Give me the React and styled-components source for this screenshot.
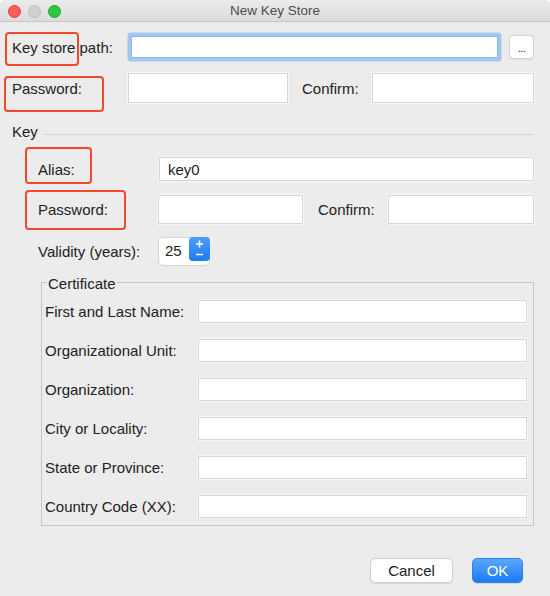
import { Fragment } from "react";
import styled, { createGlobalStyle } from "styled-components";

const GlobalStyle = createGlobalStyle`
  html, body {
    margin: 0;
    padding: 0;
    background: #ffffff;
  }
  body {
    font-family: "Liberation Sans", Arial, sans-serif;
    color: #222;
  }
`;

const Window = styled.div`
  width: 550px;
  height: 596px;
  background: #ececec;
  border-radius: 5px 5px 0 0;
  overflow: hidden;
  display: flex;
  flex-direction: column;
`;

const TitleBar = styled.div`
  position: relative;
  height: 21px;
  flex-shrink: 0;
  background: linear-gradient(#ebebeb, #dcdcdc);
  border-bottom: 1px solid #c6c6c6;
  display: flex;
  align-items: center;
  justify-content: center;
  font-size: 13.5px;
  color: #4d4d4d;
`;

const Lights = styled.div`
  position: absolute;
  left: 8px;
  top: 5px;
  display: flex;
  gap: 7px;
`;

const Light = styled.span`
  width: 13px;
  height: 13px;
  border-radius: 50%;
  box-sizing: border-box;
  background: ${(p) => p.$bg};
  border: 0.5px solid ${(p) => p.$edge};
`;

const Body = styled.div`
  padding: 10px 16px 0 12px;
  display: flex;
  flex-direction: column;
`;

const PathRow = styled.div`
  display: flex;
  align-items: center;
  height: 30px;
`;

const FieldGrid = styled.div`
  display: grid;
  grid-template-columns: ${(p) => p.$cols};
  align-items: center;
  height: ${(p) => p.$h}px;
  margin-top: ${(p) => p.$mt || 0}px;
`;

const Label = styled.div`
  position: relative;
  display: flex;
  align-items: center;
  align-self: stretch;
  font-size: 15px;
  white-space: nowrap;
  width: ${(p) => (p.$w ? `${p.$w}px` : "auto")};
  padding-left: ${(p) => p.$pl || 0}px;
  flex-shrink: 0;

  ${(p) =>
    p.$mark &&
    `
    &::after {
      content: "";
      position: absolute;
      left: ${p.$mark.l}px;
      top: ${p.$mark.t}px;
      width: ${p.$mark.w}px;
      height: ${p.$mark.h}px;
      box-sizing: border-box;
      border: 2px solid #f2482b;
      border-radius: 4px;
    }
  `}
`;

const Input = styled.div`
  box-sizing: border-box;
  height: ${(p) => p.$h}px;
  background: #fff;
  border: 1px solid #d6d6d6;
  box-shadow: 0 0 0 1px #f6f6f6;
  display: flex;
  align-items: center;
  padding-left: 8px;
  font-size: 15px;
  color: #1d1d1d;
`;

const FocusInput = styled.div`
  flex: 1;
  box-sizing: border-box;
  height: 22px;
  margin: 0 4px;
  background: #fff;
  border: 1px solid #8db6ea;
  box-shadow: 0 0 0 3.5px #a3c7f3;
  border-radius: 1px;
`;

const BrowseButton = styled.div`
  box-sizing: border-box;
  width: 25px;
  height: 24px;
  margin-left: 7px;
  background: #fff;
  border: 1px solid #d3d3d3;
  border-radius: 4px;
  box-shadow: 0 0.5px 1px rgba(0, 0, 0, 0.08);
  display: flex;
  justify-content: center;
  align-items: flex-end;
  padding-bottom: 4px;
  font-size: 11px;
  letter-spacing: -0.5px;
  line-height: 1;
`;

const SectionHeader = styled.div`
  display: flex;
  align-items: center;
  height: 16px;
  margin-top: 20px;
  font-size: 15px;
`;

const Rule = styled.div`
  flex: 1;
  height: 1px;
  background: #d2d2d2;
  margin: 6px 0 0 5px;
`;

const KeySection = styled.div`
  padding-left: 26px;
  display: flex;
  flex-direction: column;
`;

const Spinner = styled.div`
  box-sizing: border-box;
  width: 52px;
  height: 29px;
  background: #fff;
  border: 1px solid #d4d4d4;
  border-radius: 5px;
  display: flex;
  align-items: flex-start;
  font-size: 15px;
`;

const SpinValue = styled.span`
  flex: 1;
  align-self: center;
  padding-left: 6px;
  margin-top: -2px;
`;

const SpinArrows = styled.div`
  width: 21px;
  height: 24px;
  margin: -1px -1px 0 0;
  border-radius: 4px;
  background: linear-gradient(#4d9cfb, #1f7bf2);
  display: flex;
  align-items: center;
  justify-content: center;
`;

const Fieldset = styled.div`
  position: relative;
  margin: 16px 0 0 3px;
  border: 1px solid #c6c6c6;
  padding: 17px 6px 7px 3px;
  display: grid;
  grid-template-columns: 153px 1fr;
  row-gap: 16px;
  align-items: center;
`;

const Legend = styled.span`
  position: absolute;
  left: 5px;
  top: -8px;
  padding: 0 1px;
  background: #ececec;
  font-size: 15px;
  line-height: 17px;
`;

const CertLabel = styled.div`
  font-size: 15px;
  white-space: nowrap;
`;

const Footer = styled.div`
  display: flex;
  justify-content: flex-end;
  gap: 19px;
  margin-top: 32px;
  padding-right: 11px;
`;

const Button = styled.div`
  box-sizing: border-box;
  width: ${(p) => p.$w}px;
  height: 25px;
  border-radius: 5px;
  display: flex;
  align-items: center;
  justify-content: center;
  font-size: 15px;
  background: ${(p) => (p.$primary ? "linear-gradient(#5aa7fd, #1b7af6)" : "#fff")};
  color: ${(p) => (p.$primary ? "#fff" : "#222")};
  border: 1px solid ${(p) => (p.$primary ? "#2d82f0" : "#d0d0d0")};
  box-shadow: 0 0.5px 1px rgba(0, 0, 0, 0.1);
`;

const certFields = [
  "First and Last Name:",
  "Organizational Unit:",
  "Organization:",
  "City or Locality:",
  "State or Province:",
  "Country Code (XX):",
];

const StepperIcon = () => (
  <svg width="21" height="24" viewBox="0 0 21 24">
    <path d="M10.5 3.5v7M7 7h7M7 17.5h7" stroke="#fff" strokeWidth="1.6" fill="none" />
  </svg>
);

export default function App() {
  return (
    <>
      <GlobalStyle />
      <Window>
        <TitleBar>
          <Lights>
            <Light $bg="#fc5f57" $edge="#e0443e" />
            <Light $bg="#d0d0d0" $edge="#bdbdbd" />
            <Light $bg="#2bc840" $edge="#1aab29" />
          </Lights>
          New Key Store
        </TitleBar>
        <Body>
          <PathRow>
            <Label $w={115} $mark={{ l: -7, t: 0, w: 74, h: 34 }}>
              Key store path:
            </Label>
            <FocusInput />
            <BrowseButton>...</BrowseButton>
          </PathRow>

          <FieldGrid $cols="116px 160px 84px 1fr" $h={30} $mt={11}>
            <Label $mark={{ l: -8, t: 3, w: 100, h: 36 }}>Password:</Label>
            <Input $h={30} />
            <Label $pl={14}>Confirm:</Label>
            <Input $h={30} />
          </FieldGrid>

          <SectionHeader>
            Key
            <Rule />
          </SectionHeader>

          <KeySection>
            <FieldGrid $cols="121px 1fr" $h={24} $mt={18}>
              <Label $mark={{ l: -13, t: -10, w: 67, h: 37 }}>Alias:</Label>
              <Input $h={24}>key0</Input>
            </FieldGrid>

            <FieldGrid $cols="120px 145px 85px 1fr" $h={29} $mt={14}>
              <Label $mark={{ l: -13, t: -5, w: 101, h: 40 }}>Password:</Label>
              <Input $h={29} />
              <Label $pl={15}>Confirm:</Label>
              <Input $h={29} />
            </FieldGrid>

            <FieldGrid $cols="120px auto" $h={29} $mt={13}>
              <Label>Validity (years):</Label>
              <Spinner>
                <SpinValue>25</SpinValue>
                <SpinArrows>
                  <StepperIcon />
                </SpinArrows>
              </Spinner>
            </FieldGrid>

            <Fieldset>
              <Legend>Certificate</Legend>
              {certFields.map((name) => (
                <Fragment key={name}>
                  <CertLabel>{name}</CertLabel>
                  <Input $h={23} />
                </Fragment>
              ))}
            </Fieldset>
          </KeySection>

          <Footer>
            <Button $w={83}>Cancel</Button>
            <Button $w={51} $primary>
              OK
            </Button>
          </Footer>
        </Body>
      </Window>
    </>
  );
}
